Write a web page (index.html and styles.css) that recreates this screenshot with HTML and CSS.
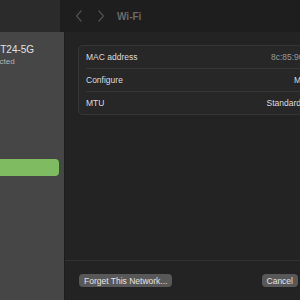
FILE: index.html
```html
<!DOCTYPE html>
<html lang="en">
<head>
  <meta charset="UTF-8">
  <title>Wi-Fi</title>
  <link rel="stylesheet" href="styles.css">
</head>
<body>
  <header class="toolbar">
    <div class="toolbar-side"></div>
    <div class="toolbar-main">
      <svg class="nav-arrow" width="8" height="12" viewBox="0 0 8 12"><polyline points="6,1 1.5,6 6,11" /></svg>
      <svg class="nav-arrow" width="8" height="12" viewBox="0 0 8 12"><polyline points="2,1 6.5,6 2,11" /></svg>
      <h1>Wi-Fi</h1>
    </div>
  </header>

  <div class="layout">
    <aside class="sidebar">
      <div class="network">
        <span class="network-name">NT24-5G</span>
        <span class="network-status">Connected</span>
      </div>
      <div class="sidebar-selected"></div>
    </aside>

    <main class="sheet">
      <div class="card">
        <div class="row">
          <span>MAC address</span>
          <span class="value dim">8c:85:90:4a:1e:7b</span>
        </div>
        <div class="row">
          <span>Configure</span>
          <span class="value popup">Manually <svg width="6" height="9" viewBox="0 0 6 9"><polyline points="1,3.5 3,1.5 5,3.5" /><polyline points="1,5.5 3,7.5 5,5.5" /></svg></span>
        </div>
        <div class="row">
          <span>MTU</span>
          <span class="value popup">Standard (1500) <svg width="6" height="9" viewBox="0 0 6 9"><polyline points="1,3.5 3,1.5 5,3.5" /><polyline points="1,5.5 3,7.5 5,5.5" /></svg></span>
        </div>
      </div>

      <footer class="sheet-footer">
        <button>Forget This Network...</button>
        <div class="actions">
          <button>Cancel</button>
          <button class="ok">OK</button>
        </div>
      </footer>
    </main>
  </div>
</body>
</html>
```

FILE: styles.css
```css
html, body { margin: 0; height: 100%; }
body {
  width: 300px;
  height: 300px;
  overflow: hidden;
  background: #232323;
  font-family: "Liberation Sans", Arial, sans-serif;
  color: #dcdcdc;
}
.toolbar {
  display: grid;
  grid-template-columns: 60px 1fr;
  height: 32px;
}
.toolbar-side { background: #2b2b2b; }
.toolbar-main {
  background: #1e1e1e;
  display: flex;
  align-items: center;
  padding-left: 15px;
  gap: 14px;
}
.nav-arrow polyline {
  fill: none;
  stroke: #4f4f4f;
  stroke-width: 1.3;
  stroke-linecap: round;
  stroke-linejoin: round;
}
.toolbar-main h1 {
  margin: 0 0 0 -2px;
  font-size: 10px;
  font-weight: bold;
  color: #6a6a6a;
}
.layout {
  display: grid;
  grid-template-columns: 65px 296px;
  height: 268px;
}
.sidebar {
  background: #464646;
  border-right: 1px solid #1c1c1c;
  padding-top: 12px;
}
.network {
  display: flex;
  flex-direction: column;
  gap: 2px;
  margin-left: -7px;
}
.network-name { font-size: 10px; color: #e2e2e2; }
.network-status { font-size: 8px; color: #b4b4b4; margin-left: -17px; }
.sidebar-selected {
  margin: 93px 0 0 -6px;
  width: 65px;
  height: 17px;
  background: #7fbb60;
  border-radius: 4px;
}
.sheet {
  display: flex;
  flex-direction: column;
  background: #232323;
}
.card {
  margin: 13px 13px 0;
  background: #272727;
  border: 1px solid #363636;
  border-radius: 5px;
  padding: 0 8px 0 7px;
}
.row {
  display: flex;
  justify-content: space-between;
  align-items: center;
  height: 22px;
  font-size: 8.5px;
  border-bottom: 1px solid #363636;
}
.row:last-child { border-bottom: none; }
.value.dim { color: #9a9a9a; }
.value.popup { display: flex; align-items: center; gap: 5px; }
.popup polyline {
  fill: none;
  stroke: #bbb;
  stroke-width: 1;
}
.sheet-footer {
  margin-top: auto;
  border-top: 1px solid #323232;
  display: flex;
  justify-content: space-between;
  padding: 13px 14px 13px;
}
.sheet-footer button, .actions button {
  font-family: inherit;
  font-size: 8.5px;
  color: #e2e2e2;
  background: #585858;
  border: none;
  border-radius: 4px;
  height: 13px;
  padding: 0 5px;
}
.actions { display: flex; gap: 6px; }
.actions .ok { min-width: 43px; }
```
